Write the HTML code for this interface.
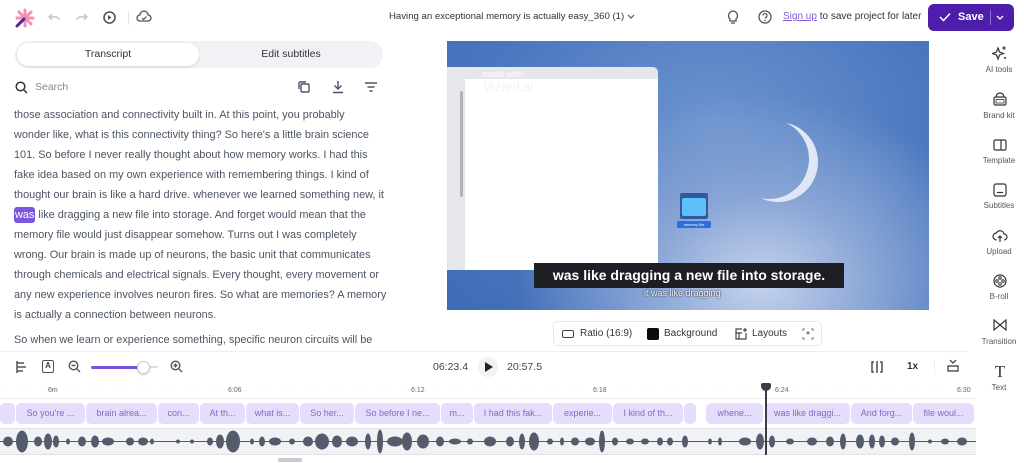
<!DOCTYPE html>
<html><head><meta charset="utf-8"><style>
*{box-sizing:border-box;margin:0;padding:0}
body{width:1024px;height:463px;overflow:hidden;background:#fff;font-family:"Liberation Sans",sans-serif;color:#374151;position:relative}
.a{position:absolute}
.txt{font-size:10.9px;line-height:20px;color:#4b5563;left:14px;top:105px;width:400px;white-space:nowrap}
.sb{width:54px;text-align:center;font-size:8px;color:#555;left:972px}
.clip{position:absolute;top:403px;height:21px;background:#e6dcfb;border-radius:5px;font-size:9px;color:#7d6cc4;text-align:center;line-height:21px;white-space:nowrap}
.rl{position:absolute;top:387px;font-size:7px;color:#666}
</style></head><body>
<svg class="a" style="left:14px;top:8px" width="22" height="20" viewBox="0 0 22 20"><g stroke="#f48fb1" stroke-width="3" stroke-linecap="round"><line x1="11" y1="2" x2="11" y2="18"/><line x1="3" y1="10" x2="19" y2="10"/><line x1="5" y1="4" x2="17" y2="16"/><line x1="17" y1="4" x2="5" y2="16"/></g><line x1="3" y1="18" x2="10" y2="11" stroke="#4c2c9c" stroke-width="3" stroke-linecap="round"/></svg>
<svg class="a" style="left:47px;top:10px" width="14" height="14"><path d="M5 4 L2 7 L5 10 M2 7 H9 a3 3 0 0 1 3 3" stroke="#c4c4c8" fill="none" stroke-width="1.4"/></svg>
<svg class="a" style="left:75px;top:10px" width="14" height="14"><path d="M9 4 L12 7 L9 10 M12 7 H5 a3 3 0 0 0 -3 3" stroke="#c4c4c8" fill="none" stroke-width="1.4"/></svg>
<svg class="a" style="left:102px;top:10px" width="15" height="15"><circle cx="7.5" cy="7.5" r="5.5" stroke="#4b5563" fill="none" stroke-width="1.6"/><path d="M6 5 L9.5 7.5 L6 10Z" fill="#4b5563"/></svg>
<div class="a" style="left:128px;top:11px;width:1px;height:14px;background:#e5e7eb"></div>
<svg class="a" style="left:136px;top:10px" width="16" height="14"><path d="M4 11 a3 3 0 0 1 0-6 a4 4 0 0 1 8 0 a3 3 0 0 1 0 6z" stroke="#4b5563" fill="none" stroke-width="1.3"/><path d="M6 8 l1.5 1.5 l3-3" stroke="#4b5563" fill="none" stroke-width="1.2"/></svg>
<div class="a" style="left:389px;top:11px;font-size:9.6px;color:#333;white-space:nowrap">Having an exceptional memory is actually easy_360 (1)</div>
<svg class="a" style="left:626px;top:13px" width="10" height="8"><path d="M2 2 L5 5 L8 2" stroke="#555" fill="none" stroke-width="1.2"/></svg>
<svg class="a" style="left:725px;top:9px" width="16" height="17"><path d="M5 10 a4.5 4.5 0 1 1 6 0 v2 h-6z M6 14 h4" stroke="#4b5563" fill="none" stroke-width="1.3"/></svg>
<svg class="a" style="left:757px;top:9px" width="16" height="16"><circle cx="8" cy="8" r="6" stroke="#4b5563" fill="none" stroke-width="1.3"/><path d="M6 6.5 a2 2 0 1 1 2.5 2 v1" stroke="#4b5563" fill="none" stroke-width="1.2"/><circle cx="8" cy="11.5" r=".8" fill="#4b5563"/></svg>
<div class="a" style="left:783px;top:11px;font-size:10px;color:#333;white-space:nowrap"><span style="color:#7c5cd6;text-decoration:underline">Sign up</span> to save project for later</div>
<div class="a" style="left:928px;top:4px;width:86px;height:27px;background:#4d1eab;border-radius:6px;color:#fff;font-size:11px;font-weight:bold">
<svg class="a" style="left:11px;top:8px" width="12" height="10"><path d="M1 5 L4.5 8.5 L11 1.5" stroke="#fff" fill="none" stroke-width="1.5"/></svg>
<span class="a" style="left:30px;top:7px">Save</span><div class="a" style="left:62px;top:6px;width:1px;height:15px;background:#8a6bd1"></div>
<svg class="a" style="left:67px;top:10px" width="10" height="8"><path d="M2 2 L5 5 L8 2" stroke="#fff" fill="none" stroke-width="1.3"/></svg></div>
<div class="a" style="left:15px;top:41px;width:368px;height:27px;background:#f1f2f6;border-radius:14px"></div>
<div class="a" style="left:17px;top:43px;width:182px;height:23px;background:#fff;border-radius:12px;box-shadow:0 1px 3px rgba(0,0,0,.12);text-align:center;line-height:23px;font-size:10.5px;color:#333">Transcript</div>
<div class="a" style="left:200px;top:43px;width:182px;height:23px;text-align:center;line-height:23px;font-size:10.5px;color:#333">Edit subtitles</div>
<svg class="a" style="left:15px;top:81px" width="13" height="13"><circle cx="5.5" cy="5.5" r="4.3" stroke="#333" fill="none" stroke-width="1.5"/><path d="M9 9 L12 12" stroke="#333" stroke-width="1.5"/></svg>
<div class="a" style="left:35px;top:81px;font-size:10.5px;color:#888">Search</div>
<svg class="a" style="left:297px;top:80px" width="14" height="14"><rect x="4" y="4" width="8" height="8" rx="1" stroke="#4b5563" fill="none" stroke-width="1.4"/><path d="M2 9 V3 a1 1 0 0 1 1-1 H9" stroke="#4b5563" fill="none" stroke-width="1.4"/></svg>
<svg class="a" style="left:331px;top:80px" width="14" height="14"><path d="M7 1 V9 M3.5 5.5 L7 9 L10.5 5.5 M2 12.5 H12" stroke="#4b5563" fill="none" stroke-width="1.4"/></svg>
<svg class="a" style="left:364px;top:81px" width="14" height="12"><path d="M1 2 H13 M3.5 6 H10.5 M5.5 10 H8.5" stroke="#4b5563" stroke-width="1.4"/></svg>
<div class="a txt">those association and connectivity built in. At this point, you probably<br>wonder like, what is this connectivity thing? So here's a little brain science<br>101. So before I never really thought about how memory works. I had this<br>fake idea based on my own experience with remembering things. I kind of<br>thought our brain is like a hard drive. whenever we learned something new, it<br><span style="background:#7b55e0;color:#fff;border-radius:3px;padding:2px 1px">was</span> like dragging a new file into storage. And forget would mean that the<br>memory file would just disappear somehow. Turns out I was completely<br>wrong. Our brain is made up of neurons, the basic unit that communicates<br>through chemicals and electrical signals. Every thought, every movement or<br>any new experience involves neuron fires. So what are memories? A memory<br>is actually a connection between neurons.<div style="height:5px"></div>So when we learn or experience something, specific neuron circuits will be</div>
<div class="a" style="left:447px;top:41px;width:482px;height:269px;overflow:hidden;background:radial-gradient(ellipse at 65% 90%,#c5d3ec 0%,#8aa6d6 25%,transparent 55%),radial-gradient(ellipse at 55% 30%,#6c93cf 0%,#4a77bf 60%,#3e6bb5 100%)">
<div class="a" style="left:0;top:26px;width:211px;height:203px;background:#e6e7ea;border-radius:0 5px 5px 0"></div>
<div class="a" style="left:18px;top:38px;width:193px;height:191px;background:#fff"></div>
<div class="a" style="left:13px;top:50px;width:3px;height:106px;background:#b0b2b6;border-radius:2px"></div>
<div class="a" style="left:35px;top:28px;font-size:9px;color:#fff;opacity:.85">made with</div>
<div class="a" style="left:36px;top:38px;font-size:13px;color:#eee;opacity:.8">Vizard.ai</div>
<div class="a" style="left:282px;top:78px;width:80px;height:80px;border-radius:50%;box-shadow:9px 3px 0 0 #dfe7f4"></div>
<div class="a" style="left:233px;top:152px;width:28px;height:26px;background:#315a9c;border-radius:2px"></div>
<div class="a" style="left:235px;top:157px;width:24px;height:18px;background:#5ec0f8;border-radius:2px"></div>
<div class="a" style="left:230px;top:180px;width:34px;height:7px;background:#2c6de0;border-radius:2px;font-size:4px;color:#fff;text-align:center;line-height:7px;white-space:nowrap;overflow:hidden">memory file</div>
<div class="a" style="left:87px;top:222px;width:310px;height:25px;background:#1d1f24;color:#fff;font-weight:bold;font-size:14px;text-align:center;line-height:25px;white-space:nowrap">was like dragging a new file into storage.</div>
<div class="a" style="left:197px;top:247px;font-size:9px;color:#eee;text-shadow:0 0 2px #000;white-space:nowrap">it was like dragging</div>
</div>
<div class="a" style="left:553px;top:321px;width:269px;height:25px;border:1px solid #e8e8ec;border-radius:5px;background:#fff;font-size:10px;color:#333">
<div class="a" style="left:8px;top:8px;width:12px;height:8px;border:1.3px solid #444;border-radius:2px"></div><span class="a" style="left:26px;top:6px">Ratio (16:9)</span>
<div class="a" style="left:93px;top:6px;width:12px;height:12px;background:#0b0b10;border-radius:2px"></div><span class="a" style="left:110px;top:6px">Background</span>
<svg class="a" style="left:180px;top:5px" width="14" height="14"><path d="M8 2 H2 V12 H12 V6 M2 6 H8 M5 6 V12 M11 1 V5 M9 3 H13" stroke="#444" fill="none" stroke-width="1.2"/></svg><span class="a" style="left:198px;top:6px">Layouts</span>
<svg class="a" style="left:248px;top:6px" width="12" height="12"><path d="M1 3 V1 H3 M9 1 H11 V3 M11 9 V11 H9 M3 11 H1 V9" stroke="#777" fill="none"/><circle cx="6" cy="5" r="1.5" fill="#777"/></svg></div>
<svg class="a" style="left:992px;top:45px" width="16" height="16"><path d="M6 3 L7.5 7 L11.5 8.5 L7.5 10 L6 14 L4.5 10 L0.5 8.5 L4.5 7Z" stroke="#333" fill="none" stroke-width="1.2"/><path d="M12 1 v4 M10 3 h4" stroke="#333"/><circle cx="13" cy="13" r="1" fill="#333"/></svg><div class="a sb" style="top:65px">AI tools</div>
<svg class="a" style="left:992px;top:91px" width="16" height="16"><rect x="2" y="6" width="12" height="8" rx="1.5" stroke="#333" fill="none" stroke-width="1.2"/><path d="M4 6 a4 4 0 0 1 8 0" stroke="#333" fill="none" stroke-width="1.2"/><rect x="4" y="8.5" width="8" height="3.5" stroke="#333" fill="none" stroke-width=".8"/></svg><div class="a sb" style="top:111px">Brand kit</div>
<svg class="a" style="left:992px;top:137px" width="16" height="16"><rect x="2" y="3" width="12" height="10" rx="1.5" stroke="#333" fill="none" stroke-width="1.2"/><path d="M9 3 V13" stroke="#333" stroke-width="1.2"/></svg><div class="a sb" style="top:156px">Template</div>
<svg class="a" style="left:992px;top:182px" width="16" height="16"><rect x="2" y="2" width="12" height="12" rx="2" stroke="#333" fill="none" stroke-width="1.2"/><path d="M5 10.5 H11" stroke="#333" stroke-width="1.2"/></svg><div class="a sb" style="top:201px">Subtitles</div>
<svg class="a" style="left:992px;top:228px" width="16" height="16"><path d="M4.5 12 a3.5 3.5 0 0 1 0-7 a4 4 0 0 1 7.5 1 a3 3 0 0 1 0 6 M8 14 V8 M6 10 L8 8 L10 10" stroke="#333" fill="none" stroke-width="1.2"/></svg><div class="a sb" style="top:247px">Upload</div>
<svg class="a" style="left:992px;top:273px" width="16" height="16"><circle cx="8" cy="8" r="6" stroke="#333" fill="none" stroke-width="1.2"/><circle cx="8" cy="5" r="1.3" stroke="#333" fill="none"/><circle cx="8" cy="11" r="1.3" stroke="#333" fill="none"/><circle cx="5" cy="8" r="1.3" stroke="#333" fill="none"/><circle cx="11" cy="8" r="1.3" stroke="#333" fill="none"/></svg><div class="a sb" style="top:292px">B-roll</div>
<svg class="a" style="left:992px;top:318px" width="16" height="14"><path d="M2 2 L14 12 V2 L2 12Z" stroke="#333" fill="none" stroke-width="1.2"/></svg><div class="a sb" style="top:337px">Transition</div>
<div class="a" style="left:992px;top:362px;width:16px;font-family:'Liberation Serif',serif;font-size:17px;color:#333;text-align:center">T</div><div class="a sb" style="top:383px">Text</div>
<div class="a" style="left:0;top:351px;width:968px;height:1px;background:#f0f0f2"></div>
<svg class="a" style="left:15px;top:360px" width="12" height="14"><path d="M2 1 V13 M2 3 H9 M2 7 H11 M2 11 H8" stroke="#4b5563" stroke-width="1.5"/></svg>
<div class="a" style="left:42px;top:360px;width:12px;height:13px;border:1.4px solid #4b5563;border-radius:2px;font-size:8px;font-weight:bold;text-align:center;line-height:10px">A</div>
<svg class="a" style="left:68px;top:360px" width="13" height="13"><circle cx="5.5" cy="5.5" r="4.3" stroke="#4b5563" fill="none" stroke-width="1.4"/><path d="M9 9 L12 12 M3.5 5.5 H7.5" stroke="#4b5563" stroke-width="1.4"/></svg>
<div class="a" style="left:91px;top:366px;width:53px;height:3px;background:#7b4fe0;border-radius:2px"></div>
<div class="a" style="left:144px;top:366px;width:14px;height:2px;background:#ddd"></div>
<div class="a" style="left:137px;top:361px;width:13px;height:13px;border-radius:50%;background:#fff;border:1px solid #ccc;box-shadow:0 1px 2px rgba(0,0,0,.2)"></div>
<svg class="a" style="left:170px;top:360px" width="13" height="13"><circle cx="5.5" cy="5.5" r="4.3" stroke="#4b5563" fill="none" stroke-width="1.4"/><path d="M9 9 L12 12 M3.5 5.5 H7.5 M5.5 3.5 V7.5" stroke="#4b5563" stroke-width="1.4"/></svg>
<div class="a" style="left:433px;top:361px;font-size:10.5px;color:#444">06:23.4</div>
<div class="a" style="left:478px;top:357px;width:20px;height:20px;border-radius:50%;background:#f2f2f4"></div>
<svg class="a" style="left:484px;top:362px" width="10" height="10"><path d="M1 0 L9 5 L1 10Z" fill="#222"/></svg>
<div class="a" style="left:507px;top:361px;font-size:10.5px;color:#444">20:57.5</div>
<svg class="a" style="left:870px;top:361px" width="14" height="12"><path d="M4 1 H2 V11 H4 M10 1 H12 V11 H10 M7 0 V12" stroke="#333" fill="none" stroke-width="1.3"/></svg>
<div class="a" style="left:907px;top:361px;font-size:10px;font-weight:bold;color:#333">1x</div>
<div class="a" style="left:934px;top:360px;width:1px;height:14px;background:#eee"></div>
<svg class="a" style="left:946px;top:359px" width="14" height="14"><path d="M4 1 L7 4 L10 1 M2 7 H12 V12 H2Z" stroke="#333" fill="none" stroke-width="1.2"/></svg>
<div class="rl" style="left:48px">6m</div><div class="rl" style="left:228px">6:06</div><div class="rl" style="left:411px">6:12</div><div class="rl" style="left:593px">6:18</div><div class="rl" style="left:775px">6:24</div><div class="rl" style="left:957px">6:30</div>
<div class="a" style="left:0;top:398px;width:976px;height:1px;background:#eee"></div>
<div class="a" style="left:0;top:390px;width:976px;height:1px;background-image:radial-gradient(circle,#bbb 0.6px,transparent 0.8px);background-size:12px 2px;opacity:.8"></div>
<div class="clip" style="left:0;width:15px"></div>
<div class="clip" style="left:16px;width:69px">So you're ...</div>
<div class="clip" style="left:86px;width:71px">brain alrea...</div>
<div class="clip" style="left:158px;width:41px">con...</div>
<div class="clip" style="left:200px;width:45px">At th...</div>
<div class="clip" style="left:246px;width:53px">what is...</div>
<div class="clip" style="left:300px;width:54px">So her...</div>
<div class="clip" style="left:355px;width:85px">So before I ne...</div>
<div class="clip" style="left:441px;width:32px">m...</div>
<div class="clip" style="left:474px;width:78px">I had this fak...</div>
<div class="clip" style="left:553px;width:59px">experie...</div>
<div class="clip" style="left:613px;width:70px">I kind of th...</div>
<div class="clip" style="left:684px;width:12px"></div>
<div class="clip" style="left:706px;width:57px">whene...</div>
<div class="clip" style="left:765px;width:85px">was like draggi...</div>
<div class="clip" style="left:851px;width:61px">And forg...</div>
<div class="clip" style="left:913px;width:61px">file woul...</div>
<div class="a" style="left:0;top:428px;width:976px;height:27px;background:#f1f2f5;border-top:1px solid #e2e2e6;border-bottom:1px solid #e2e2e6"></div>
<svg class="a" style="left:0;top:428px" width="976" height="27">
<line x1="0" y1="13.5" x2="976" y2="13.5" stroke="#545c6c" stroke-width="1"/>
<g fill="#545c6c">
<ellipse cx="8" cy="13.5" rx="5" ry="5"/><ellipse cx="22" cy="13.5" rx="6" ry="11"/><ellipse cx="38" cy="13.5" rx="4" ry="5"/><ellipse cx="48" cy="13.5" rx="4" ry="8"/><ellipse cx="56" cy="13.5" rx="3" ry="6"/><ellipse cx="68" cy="13.5" rx="2" ry="3"/><ellipse cx="82" cy="13.5" rx="4" ry="5"/><ellipse cx="95" cy="13.5" rx="4" ry="6"/><ellipse cx="108" cy="13.5" rx="6" ry="4"/><ellipse cx="130" cy="13.5" rx="4" ry="4"/><ellipse cx="143" cy="13.5" rx="5" ry="4"/><ellipse cx="152" cy="13.5" rx="2" ry="3"/><ellipse cx="178" cy="13.5" rx="2" ry="2"/><ellipse cx="192" cy="13.5" rx="2" ry="2"/><ellipse cx="210" cy="13.5" rx="3" ry="4"/><ellipse cx="220" cy="13.5" rx="4" ry="7"/><ellipse cx="233" cy="13.5" rx="7" ry="11"/><ellipse cx="252" cy="13.5" rx="2" ry="3"/><ellipse cx="262" cy="13.5" rx="3" ry="5"/><ellipse cx="275" cy="13.5" rx="6" ry="4"/><ellipse cx="292" cy="13.5" rx="3" ry="3"/><ellipse cx="308" cy="13.5" rx="5" ry="5"/><ellipse cx="322" cy="13.5" rx="7" ry="8"/><ellipse cx="337" cy="13.5" rx="5" ry="6"/><ellipse cx="352" cy="13.5" rx="6" ry="5"/><ellipse cx="368" cy="13.5" rx="3" ry="8"/><ellipse cx="380" cy="13.5" rx="3" ry="12"/><ellipse cx="395" cy="13.5" rx="8" ry="5"/><ellipse cx="407" cy="13.5" rx="5" ry="9"/><ellipse cx="423" cy="13.5" rx="6" ry="7"/><ellipse cx="440" cy="13.5" rx="4" ry="5"/><ellipse cx="455" cy="13.5" rx="6" ry="3"/><ellipse cx="470" cy="13.5" rx="3" ry="3"/><ellipse cx="490" cy="13.5" rx="6" ry="5"/><ellipse cx="510" cy="13.5" rx="4" ry="5"/><ellipse cx="522" cy="13.5" rx="3" ry="8"/><ellipse cx="534" cy="13.5" rx="5" ry="9"/><ellipse cx="550" cy="13.5" rx="3" ry="3"/><ellipse cx="562" cy="13.5" rx="2" ry="4"/><ellipse cx="575" cy="13.5" rx="4" ry="4"/><ellipse cx="590" cy="13.5" rx="5" ry="4"/><ellipse cx="602" cy="13.5" rx="3" ry="11"/><ellipse cx="615" cy="13.5" rx="3" ry="4"/><ellipse cx="630" cy="13.5" rx="4" ry="3"/><ellipse cx="645" cy="13.5" rx="4" ry="3"/><ellipse cx="660" cy="13.5" rx="3" ry="4"/><ellipse cx="670" cy="13.5" rx="3" ry="4"/><ellipse cx="685" cy="13.5" rx="3" ry="6"/><ellipse cx="710" cy="13.5" rx="2" ry="3"/><ellipse cx="720" cy="13.5" rx="2" ry="4"/><ellipse cx="745" cy="13.5" rx="6" ry="4"/><ellipse cx="760" cy="13.5" rx="4" ry="8"/><ellipse cx="772" cy="13.5" rx="3" ry="6"/><ellipse cx="790" cy="13.5" rx="4" ry="3"/><ellipse cx="812" cy="13.5" rx="5" ry="4"/><ellipse cx="830" cy="13.5" rx="4" ry="5"/><ellipse cx="843" cy="13.5" rx="3" ry="8"/><ellipse cx="860" cy="13.5" rx="4" ry="7"/><ellipse cx="872" cy="13.5" rx="3" ry="7"/><ellipse cx="882" cy="13.5" rx="3" ry="6"/><ellipse cx="895" cy="13.5" rx="4" ry="4"/><ellipse cx="912" cy="13.5" rx="3" ry="9"/><ellipse cx="930" cy="13.5" rx="2" ry="2"/><ellipse cx="945" cy="13.5" rx="4" ry="3"/><ellipse cx="962" cy="13.5" rx="5" ry="4"/>
</g></svg>
<div class="a" style="left:765px;top:388px;width:2px;height:67px;background:#3a3d46"></div>
<div class="a" style="left:761px;top:383px;width:10px;height:8px;background:#3a3d46;border-radius:2px 2px 5px 5px"></div>
<div class="a" style="left:278px;top:458px;width:24px;height:4px;background:#c9c9cc;border-radius:2px"></div>
</body></html>
